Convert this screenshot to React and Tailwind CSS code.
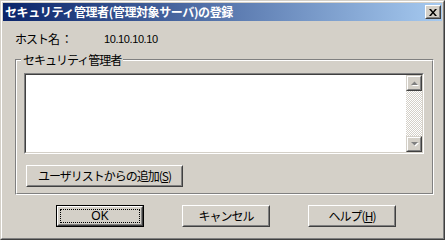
import React from 'react';

const jp = "font-['Noto_Sans_CJK_JP',sans-serif]";

function RaisedButton({ children, className = '', isDefault = false }) {
  const face = (
    <div className="h-full w-full border border-t-white border-l-white border-r-[#404040] border-b-[#404040]">
      <div className="relative flex h-full w-full items-center justify-center border border-t-[#d4d0c8] border-l-[#d4d0c8] border-r-[#808080] border-b-[#808080] text-[12px] leading-[16px] tracking-[-1px] text-black">
        {children}
      </div>
    </div>
  );
  if (isDefault) {
    return (
      <div className={`relative border border-black ${className}`}>
        {face}
        {/* focus rectangle */}
        <div className="pointer-events-none absolute inset-[3px] border border-dotted border-black" />
      </div>
    );
  }
  return <div className={className}>{face}</div>;
}

function Arrow({ up }) {
  return (
    <svg width="9" height="6" viewBox="0 0 9 6">
      {up ? (
        <>
          <path d="M1 5h7L4.5 1.5z" fill="#fff" transform="translate(1 1)" />
          <path d="M1 5h7L4.5 1.5z" fill="#808080" />
        </>
      ) : (
        <>
          <path d="M1 1h7L4.5 4.5z" fill="#fff" transform="translate(1 1)" />
          <path d="M1 1h7L4.5 4.5z" fill="#808080" />
        </>
      )}
    </svg>
  );
}

function ScrollButton({ up }) {
  return (
    <div className="h-[16px] w-[16px] border border-t-[#d4d0c8] border-l-[#d4d0c8] border-r-[#404040] border-b-[#404040]">
      <div className="flex h-full w-full items-center justify-center border border-t-white border-l-white border-r-[#808080] border-b-[#808080] bg-[#d4d0c8]">
        <Arrow up={up} />
      </div>
    </div>
  );
}

export default function App() {
  return (
    <div className={`h-[240px] w-[445px] bg-[#d4d0c8] ${jp}`}>
      <div className="h-full w-full border border-t-[#d4d0c8] border-l-[#d4d0c8] border-r-[#404040] border-b-[#404040]">
        <div className="h-full w-full border border-t-white border-l-white border-r-[#808080] border-b-[#808080]">
          <div className="flex h-full w-full flex-col p-px">
            {/* title bar */}
            <div className="flex h-[18px] shrink-0 items-center justify-between bg-[linear-gradient(to_right,#0a246a,#a6caf0)] pl-[2px] pr-[1px]">
              <span className="text-[12px] font-bold leading-[16px] tracking-[-0.4px] text-white">
                セキュリティ管理者(管理対象サーバ)の登録
              </span>
              <div className="h-[14px] w-[16px] border border-t-white border-l-white border-r-[#404040] border-b-[#404040]">
                <div className="flex h-full w-full items-center justify-center border border-t-[#d4d0c8] border-l-[#d4d0c8] border-r-[#808080] border-b-[#808080] bg-[#d4d0c8]">
                  <svg width="8" height="7" viewBox="0 0 8 7">
                    <path d="M0 0h2l2 2.5L6 0h2L5 3.5 8 7H6L4 4.5 2 7H0l3-3.5z" fill="#000" />
                  </svg>
                </div>
              </div>
            </div>

            {/* host row */}
            <div className="mt-[10px] flex h-[16px] items-center pl-[12px] text-[12px] leading-[16px] text-black">
              <span className="w-[89px] tracking-[-1px]">ホスト名 ：</span>
              <span className="font-['Liberation_Sans',sans-serif] text-[11px] tracking-[-0.4px]">10.10.10.10</span>
            </div>

            {/* group box */}
            <div className="relative ml-[12px] mt-[12px] h-[136px] w-[419px] border border-t-[#808080] border-l-[#808080] border-r-white border-b-white">
              <div className="h-full w-full border border-t-white border-l-white border-r-[#808080] border-b-[#808080] pl-[7px] pt-[12px]">
                {/* list box */}
                <div className="flex h-[81px] w-[400px] border border-t-[#808080] border-l-[#808080] border-r-white border-b-white">
                  <div className="flex h-full w-full border border-t-[#404040] border-l-[#404040] border-r-[#d4d0c8] border-b-[#d4d0c8] bg-white">
                    <div className="flex-1" />
                    <div className="flex w-[16px] flex-col">
                      <ScrollButton up />
                      <div className="flex-1 bg-[repeating-conic-gradient(#ffffff_0_25%,#d4d0c8_0_50%)] bg-[length:2px_2px]" />
                      <ScrollButton />
                    </div>
                  </div>
                </div>
                <RaisedButton className="ml-[2px] mt-[11px] h-[22px] w-[157px]">
                  ユーザリストからの追加(<span className="underline">S</span>)
                </RaisedButton>
              </div>
              <span className="absolute left-[5px] top-[-8px] bg-[#d4d0c8] px-[2px] text-[12px] leading-[16px] tracking-[-1px] text-black">
                セキュリティ管理者
              </span>
            </div>

            {/* dialog buttons */}
            <div className="mt-[10px] flex gap-[38px] pl-[53px]">
              <RaisedButton isDefault className="h-[22px] w-[88px]">
                <span className="font-['Liberation_Sans',sans-serif] tracking-normal">OK</span>
              </RaisedButton>
              <RaisedButton className="h-[22px] w-[88px]">キャンセル</RaisedButton>
              <RaisedButton className="h-[22px] w-[88px]">
                ヘルプ(<span className="underline">H</span>)
              </RaisedButton>
            </div>
          </div>
        </div>
      </div>
    </div>
  );
}
